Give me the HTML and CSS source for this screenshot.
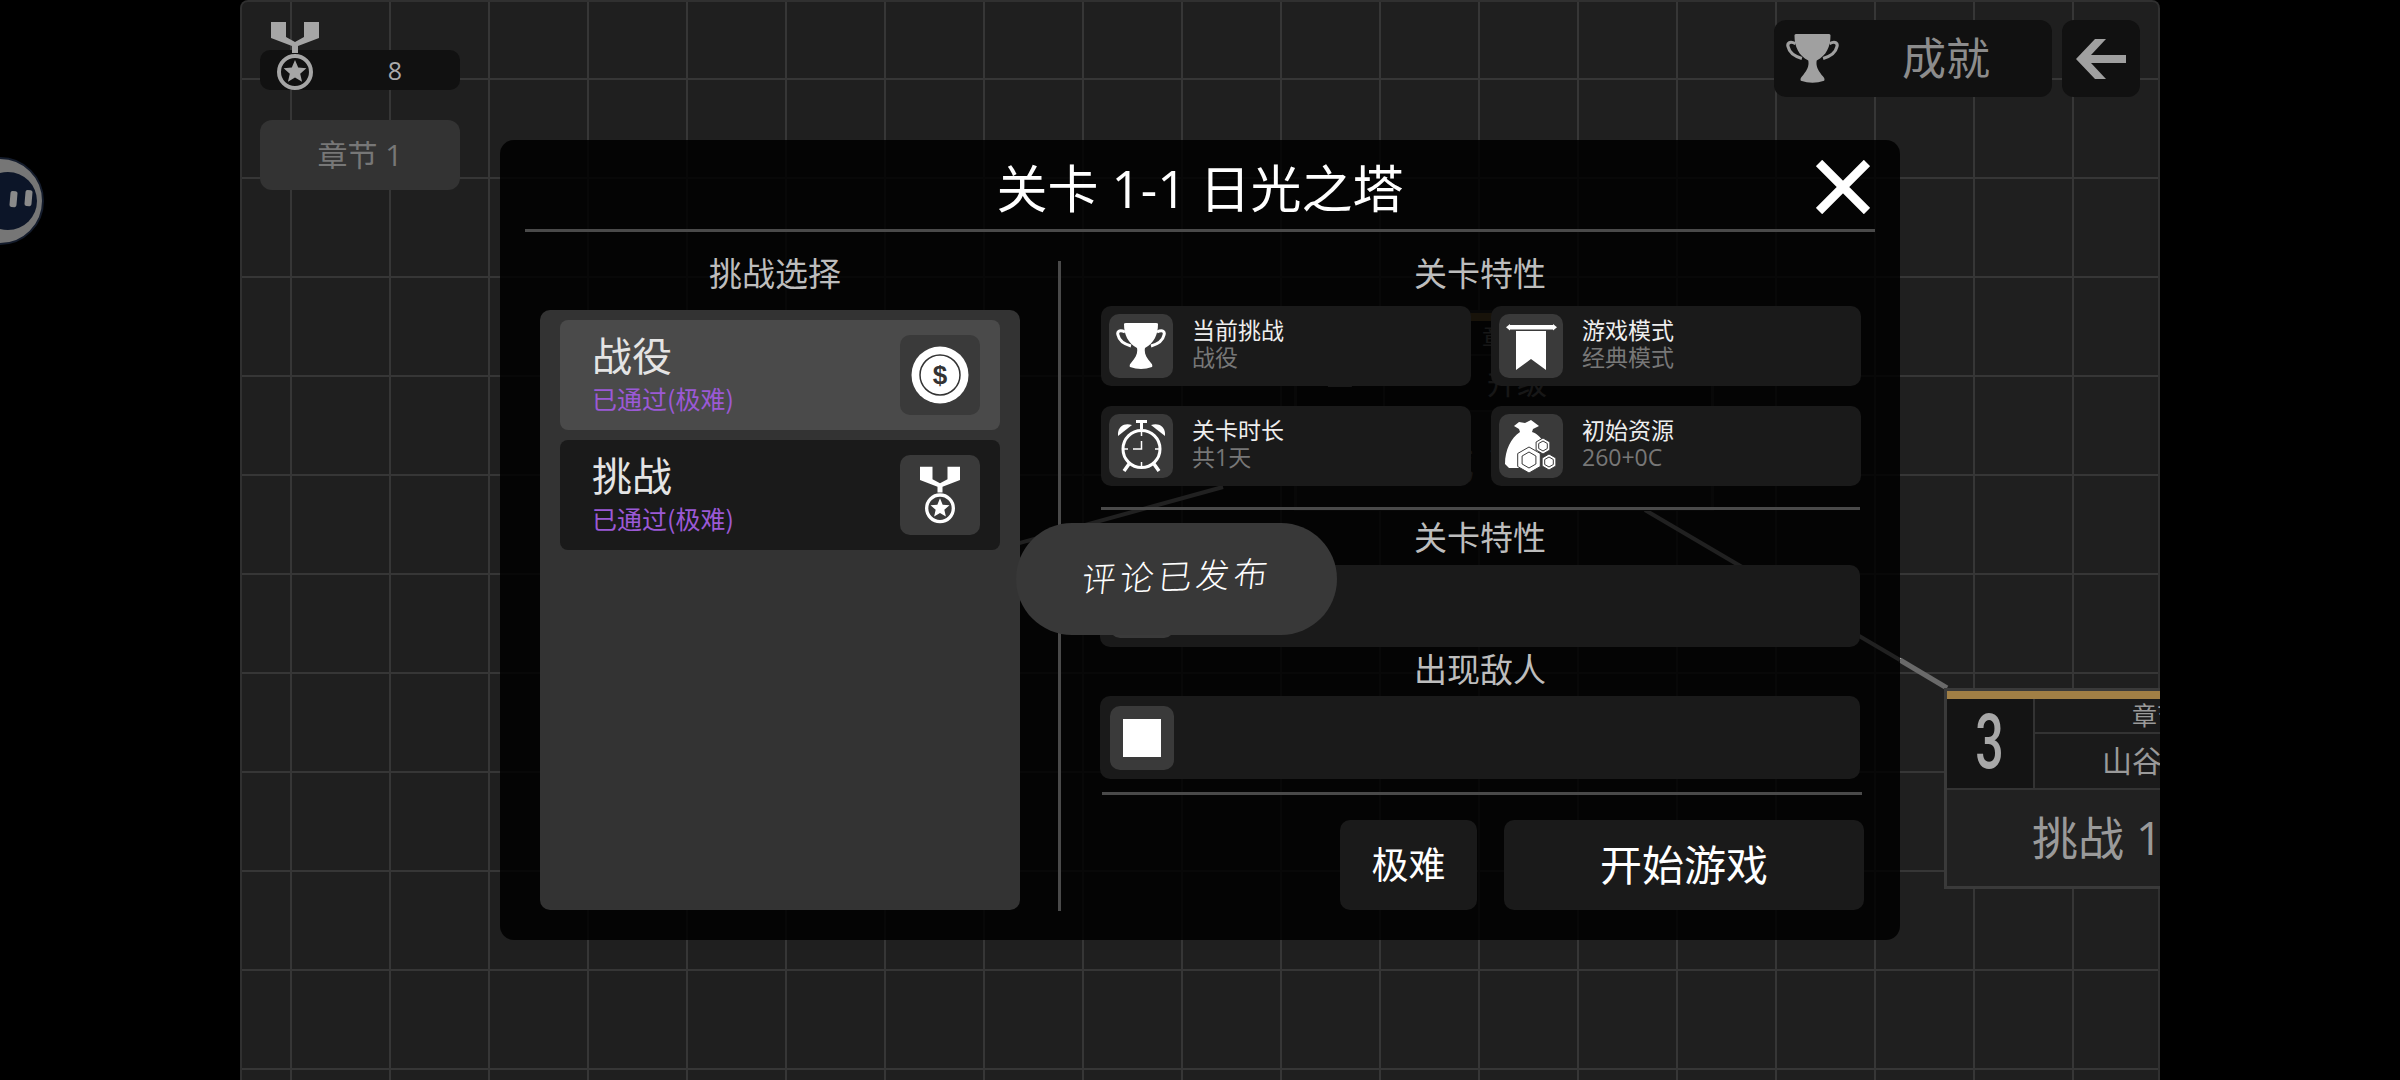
FILE: index.html
```html
<!DOCTYPE html>
<html lang="zh-CN">

<head>
    <meta charset="UTF-8">
    <title>关卡 1-1 日光之塔</title>
    <link rel="stylesheet" href="styles.css">
</head>

<body>
    <!-- shared icons -->
    <svg class="defs" aria-hidden="true">
        <symbol id="icon-medal" viewBox="0 0 48 68">
            <polygon fill="currentColor" points="0,0 15,0 15,15 24,20 33,15 33,0 48,0 48,16 27,24 27,31 21,31 21,24 0,16" />
            <circle cx="24" cy="50" r="16" fill="none" stroke="currentColor" stroke-width="4" />
            <polygon fill="currentColor" points="24,38 27.2,45.55 35.4,46.3 29.2,51.7 31.05,59.7 24,55.5 16.95,59.7 18.8,51.7 12.6,46.3 20.8,45.55" />
        </symbol>
        <symbol id="icon-trophy" viewBox="0 0 50 47">
            <path fill="currentColor" d="M8 1Q8 0 10 0H40Q42 0 42 1C42 12 38 20 29 25C28 30 30 34 35 40Q37 42 36 44Q25 48 14 44Q13 42 15 40C20 34 22 30 21 25C12 20 8 12 8 1Z" />
            <path fill="none" stroke="currentColor" stroke-width="3" d="M9 9C3 6 1 9 2 12C3 17 8 21 15 23" />
            <path fill="none" stroke="currentColor" stroke-width="3" d="M41 9C47 6 49 9 48 12C47 17 42 21 35 23" />
        </symbol>
    </svg>

    <!-- floating assistant ball on the black strip -->
    <svg class="float-ball" viewBox="0 0 50 100">
        <circle cx="0" cy="51" r="43" fill="#767676" stroke="#141c2c" stroke-width="2" />
        <circle cx="8" cy="51" r="29" fill="#0c1528" />
        <rect x="10" y="41" width="7" height="16" rx="2" fill="#8a8a8a" transform="rotate(5 13 49)" />
        <rect x="25" y="40" width="7" height="16" rx="2" fill="#8a8a8a" transform="rotate(5 28 48)" />
    </svg>

    <div class="game">
        <!-- map under the dialog -->
        <svg class="map-lines" viewBox="0 0 1920 1080">
            <line x1="660" y1="576" x2="983" y2="487" stroke="#ddd" stroke-width="4" />
            <line x1="1405" y1="510" x2="1660" y2="660" stroke="#ddd" stroke-width="4" />
            <line x1="1660" y1="660" x2="1707" y2="688" stroke="#6a6a6a" stroke-width="5" />
        </svg>

        <div class="node node-hidden">
            <div class="node-bar"></div>
            <div class="node-top">
                <div class="node-num"><span>2</span></div>
                <div class="node-info">
                    <div class="node-chapter">章节 2</div>
                    <div class="node-name">升级</div>
                </div>
            </div>
            <div class="node-bottom">挑战 1</div>
        </div>

        <div class="node node-right">
            <div class="node-bar"></div>
            <div class="node-top">
                <div class="node-num"><span>3</span></div>
                <div class="node-info">
                    <div class="node-chapter">章节 3</div>
                    <div class="node-name">山谷</div>
                </div>
            </div>
            <div class="node-bottom">挑战 1</div>
        </div>

        <!-- top bar -->
        <div class="hud">
            <div class="hud-left">
                <div class="medal-pill">
                    <svg class="medal-icon"><use href="#icon-medal" /></svg>
                    <span>8</span>
                </div>
                <div class="chapter-btn">章节 1</div>
            </div>
            <div class="hud-right">
                <div class="achieve-btn">
                    <svg class="achieve-icon"><use href="#icon-trophy" /></svg>
                    <span>成就</span>
                </div>
                <div class="back-btn">
                    <svg class="back-icon" viewBox="0 0 50 40">
                        <polygon points="0,20 19,0 30,0 15,16 50,16 50,24 15,24 30,40 19,40" />
                    </svg>
                </div>
            </div>
        </div>

        <!-- level dialog -->
        <div class="modal">
            <div class="modal-head">
                <h1>关卡 1-1 日光之塔</h1>
                <svg class="close-icon" viewBox="0 0 54 54">
                    <path d="M3 3L51 51M51 3L3 51" />
                </svg>
            </div>

            <div class="modal-body">
                <div class="left-col">
                    <div class="section-title left-title">挑战选择</div>
                    <div class="mode-panel">
                        <div class="mode-item active">
                            <div class="mode-text">
                                <div class="mode-name">战役</div>
                                <div class="mode-state">已通过(极难)</div>
                            </div>
                            <div class="mode-icon">
                                <svg class="coin-icon" viewBox="0 0 58 58">
                                    <circle cx="29" cy="29" r="28.5" fill="#fff" />
                                    <circle cx="29" cy="29" r="20" fill="none" stroke="#333" stroke-width="1.5" />
                                    <text x="29" y="38" text-anchor="middle" class="coin-sign">$</text>
                                </svg>
                            </div>
                        </div>
                        <div class="mode-item">
                            <div class="mode-text">
                                <div class="mode-name">挑战</div>
                                <div class="mode-state">已通过(极难)</div>
                            </div>
                            <div class="mode-icon">
                                <svg class="mode-medal"><use href="#icon-medal" /></svg>
                            </div>
                        </div>
                    </div>
                </div>

                <div class="v-divider"></div>

                <div class="right-col">
                    <div class="section-title">关卡特性</div>
                    <div class="stat-grid">
                        <div class="stat-card">
                            <div class="icon-box">
                                <svg class="stat-trophy"><use href="#icon-trophy" /></svg>
                            </div>
                            <div class="stat-text">
                                <div class="stat-name">当前挑战</div>
                                <div class="stat-value">战役</div>
                            </div>
                        </div>
                        <div class="stat-card">
                            <div class="icon-box">
                                <svg class="stat-banner" viewBox="0 0 51 47">
                                    <rect x="3" y="2" width="45" height="4.5" />
                                    <polygon points="0,4.2 4,1 4,7.5" />
                                    <polygon points="51,4.2 47,1 47,7.5" />
                                    <polygon points="10,8 40,8 40,47 25,36 10,47" />
                                </svg>
                            </div>
                            <div class="stat-text">
                                <div class="stat-name">游戏模式</div>
                                <div class="stat-value">经典模式</div>
                            </div>
                        </div>
                        <div class="stat-card">
                            <div class="icon-box">
                                <svg class="stat-clock" viewBox="0 0 47 52">
                                    <rect class="fill" x="18" y="0" width="11" height="3" />
                                    <rect class="fill" x="22" y="3" width="3" height="6" />
                                    <path class="fill" d="M0 16C-1 7 6 2 14 5Z" />
                                    <path class="fill" d="M47 16C48 7 41 2 33 5Z" />
                                    <circle class="line" cx="23.5" cy="29" r="18.5" stroke-width="3" />
                                    <path class="line" stroke-width="1.5" d="M23.5 12V16M23.5 42V46M6 29H10M37 29H41" />
                                    <path class="line" stroke-width="1.5" d="M23.5 21V29H15" />
                                    <path class="line" stroke-width="3.5" d="M11 44L6 51M36 44L41 51" />
                                </svg>
                            </div>
                            <div class="stat-text">
                                <div class="stat-name">关卡时长</div>
                                <div class="stat-value">共1天</div>
                            </div>
                        </div>
                        <div class="stat-card">
                            <div class="icon-box">
                                <svg class="stat-bag" viewBox="0 0 52 53">
                                    <path fill="#fff" d="M9 6L14 2L20 3L26 0L34 6L28 9L27 12C33 14 36 18 38 22L28 48L4 48L0 44C0 30 6 18 15 12L14 9Z" />
                                    <g fill="#fff" stroke="#3a3a3a" stroke-width="1">
                                        <polygon points="38,18 44.9,22 44.9,30 38,34 31.1,30 31.1,22" />
                                        <polygon points="38,21 42.3,23.5 42.3,28.5 38,31 33.7,28.5 33.7,23.5" />
                                        <polygon points="44,34 50.9,38 50.9,46 44,50 37.1,46 37.1,38" />
                                        <polygon points="44,37 48.3,39.5 48.3,44.5 44,47 39.7,44.5 39.7,39.5" />
                                        <polygon points="24,27 35.3,33.5 35.3,46.5 24,53 12.7,46.5 12.7,33.5" />
                                        <polygon points="24,32 30.9,36 30.9,44 24,48 17.1,44 17.1,36" />
                                    </g>
                                </svg>
                            </div>
                            <div class="stat-text">
                                <div class="stat-name">初始资源</div>
                                <div class="stat-value">260+0C</div>
                            </div>
                        </div>
                    </div>

                    <div class="h-divider"></div>

                    <div class="section-title second-title">关卡特性</div>
                    <div class="wide-card traits">
                        <div class="icon-box"></div>
                    </div>

                    <div class="section-title third-title">出现敌人</div>
                    <div class="wide-card enemies">
                        <div class="icon-box">
                            <div class="enemy-square"></div>
                        </div>
                    </div>

                    <div class="h-divider last"></div>

                    <div class="actions">
                        <div class="btn btn-level">极难</div>
                        <div class="btn btn-start">开始游戏</div>
                    </div>
                </div>
            </div>
        </div>

        <div class="toast"><span>评论已发布</span></div>
    </div>
</body>

</html>
```

FILE: styles.css
```css
/* Page and game area */
body {
    margin: 0;
    height: 1080px;
    background-color: #000;
    display: flex;
    justify-content: center;
    overflow: hidden;
    font-family: "Open Sans", "Noto Sans CJK SC", sans-serif;
}

.defs {
    position: absolute;
    width: 0;
    height: 0;
}

.float-ball {
    position: absolute;
    left: 0;
    top: 150px;
    width: 50px;
    height: 100px;
}

.game {
    position: relative;
    width: 1920px;
    height: 1080px;
    overflow: hidden;
    border-radius: 8px 8px 0 0;
    background-color: #1f1f1f;
    background-image:
        linear-gradient(to right, #363636 2px, transparent 2px),
        linear-gradient(to bottom, #363636 2px, transparent 2px);
    background-size: 99px 99px;
    background-position: 50px 78px;
    box-shadow: inset 0 2px 0 #303030, inset 2px 0 0 #303030, inset -2px 0 0 #303030;
}

.map-lines {
    position: absolute;
    left: 0;
    top: 0;
    width: 1920px;
    height: 1080px;
}

/* Chapter nodes on the map */
.node {
    position: absolute;
    width: 420px;
    height: 201px;
    box-sizing: border-box;
    border: 3px solid #3a3a3a;
    background-color: #212121;
    color: #9a9a9a;
}

.node-right {
    left: 1704px;
    top: 688px;
}

.node-hidden {
    left: 1054px;
    top: 310px;
}

.node-bar {
    height: 8px;
    background-color: #a17f45;
}

.node-top {
    display: flex;
    height: 91px;
    border-bottom: 2px solid #333;
    box-sizing: border-box;
}

.node-num {
    width: 88px;
    padding-bottom: 4px;
    background-color: #141414;
    border-right: 2px solid #333;
    box-sizing: border-box;
    display: flex;
    align-items: center;
    justify-content: center;
    font-family: "Roboto", sans-serif;
    font-weight: 500;
    font-size: 76px;
    color: #a8a8a8;
}

.node-hidden .node-num {
    padding-bottom: 10px;
}

.node-num span {
    transform: scaleX(0.66);
}

.node-info {
    flex: 1;
    display: flex;
    flex-direction: column;
    background-color: #1a1a1a;
}

.node-chapter {
    height: 33px;
    line-height: 33px;
    padding-left: 97px;
    font-size: 25px;
    border-bottom: 2px solid #333;
}

.node-name {
    flex: 1;
    line-height: 54px;
    padding-left: 67px;
    font-size: 30px;
}

.node-hidden .node-name {
    padding-left: 102px;
}

.node-bottom {
    height: 99px;
    line-height: 94px;
    padding-left: 85px;
    font-size: 46px;
}

/* Top bar */
.hud {
    position: relative;
    display: flex;
    justify-content: space-between;
    padding: 20px 20px 0;
}

.hud-left {
    width: 200px;
    padding-top: 30px;
}

.medal-pill {
    position: relative;
    height: 40px;
    border-radius: 10px;
    background-color: #111;
    color: #aaa;
    font-size: 25px;
    line-height: 40px;
    text-align: center;
    padding-left: 70px;
    box-sizing: border-box;
}

.medal-icon {
    position: absolute;
    left: 11px;
    top: -28px;
    width: 48px;
    height: 68px;
    color: #a6a6a6;
}

.chapter-btn {
    margin-top: 30px;
    height: 70px;
    border-radius: 12px;
    background-color: #333;
    color: #777;
    font-size: 30px;
    line-height: 70px;
    text-align: center;
}

.hud-right {
    display: flex;
    gap: 10px;
}

.achieve-btn {
    display: flex;
    align-items: center;
    width: 278px;
    height: 77px;
    padding-left: 12px;
    box-sizing: border-box;
    border-radius: 12px;
    background-color: #111;
    color: #8c8c8c;
    font-size: 44px;
}

.achieve-icon {
    width: 53px;
    height: 50px;
    color: #a0a0a0;
}

.achieve-btn span {
    margin: 0 0 5px 63px;
}

.back-btn {
    width: 78px;
    height: 77px;
    border-radius: 12px;
    background-color: #111;
    display: flex;
    align-items: center;
    justify-content: center;
}

.back-icon {
    width: 50px;
    height: 40px;
    fill: #a0a0a0;
}

/* Level dialog */
.modal {
    position: absolute;
    left: 260px;
    top: 140px;
    width: 1400px;
    height: 800px;
    border-radius: 14px;
    background-color: rgba(0, 0, 0, 0.85);
}

.modal-head {
    position: relative;
    height: 89px;
    margin: 0 25px;
    border-bottom: 3px solid #4a4a4a;
    display: flex;
    align-items: center;
    justify-content: center;
}

.modal-head h1 {
    margin: 0 0 -2px;
    font-size: 51px;
    font-weight: 400;
    color: #fff;
}

.close-icon {
    position: absolute;
    right: 5px;
    top: 20px;
    width: 54px;
    height: 54px;
    fill: none;
    stroke: #fff;
    stroke-width: 9;
}

.modal-body {
    display: flex;
}

.section-title {
    height: 40px;
    line-height: 40px;
    margin-top: 22px;
    text-align: center;
    font-size: 33px;
    color: #bdbdbd;
}

.left-col {
    width: 480px;
    margin-left: 40px;
}

.left-title {
    margin-bottom: 16px;
    padding-right: 10px;
}

.mode-panel {
    height: 600px;
    box-sizing: border-box;
    padding: 10px 20px;
    border-radius: 10px;
    background-color: #333;
    display: flex;
    flex-direction: column;
    gap: 10px;
}

.mode-item {
    height: 110px;
    padding: 0 20px 0 32px;
    border-radius: 8px;
    background-color: #1a1a1a;
    display: flex;
    align-items: center;
    justify-content: space-between;
}

.mode-item.active {
    background-color: #4a4a4a;
}

.mode-text {
    padding-bottom: 3px;
}

.mode-name {
    margin-bottom: 3px;
    font-size: 40px;
    line-height: 46px;
    color: #e4e4e4;
}

.mode-state {
    font-family: "Noto Sans CJK SC", sans-serif;
    font-size: 25px;
    line-height: 32px;
    color: #9b59d6;
}

.mode-icon {
    width: 80px;
    height: 80px;
    border-radius: 10px;
    background-color: #3a3a3a;
    display: flex;
    align-items: center;
    justify-content: center;
}

.coin-icon {
    width: 58px;
    height: 58px;
}

.coin-sign {
    font-family: "Liberation Sans", sans-serif;
    font-weight: 700;
    font-size: 26px;
    fill: #333;
}

.mode-medal {
    width: 40px;
    height: 58px;
    color: #fff;
}

.v-divider {
    width: 3px;
    height: 650px;
    margin: 29px 0 0 38px;
    background-color: #4a4a4a;
}

.right-col {
    width: 760px;
    margin-left: 39px;
}

.stat-grid {
    display: grid;
    grid-template-columns: 370px 370px;
    grid-auto-rows: 80px;
    gap: 20px;
    margin-top: 12px;
    margin-left: 1px;
}

.stat-card {
    display: flex;
    align-items: center;
    gap: 19px;
    padding-left: 8px;
    border-radius: 10px;
    background-color: #1a1a1a;
}

.icon-box {
    width: 64px;
    height: 64px;
    flex: none;
    border-radius: 10px;
    background-color: #3a3a3a;
    display: flex;
    align-items: center;
    justify-content: center;
}

.stat-text {
    padding-bottom: 4px;
}

.stat-name {
    font-size: 23px;
    line-height: 27.5px;
    color: #eee;
}

.stat-value {
    font-size: 23px;
    line-height: 27.5px;
    color: #777;
}

.stat-trophy {
    width: 50px;
    height: 47px;
    color: #fff;
}

.stat-banner {
    width: 51px;
    height: 47px;
    fill: #fff;
}

.stat-clock {
    width: 47px;
    height: 52px;
}

.stat-clock .fill {
    fill: #fff;
}

.stat-clock .line {
    fill: none;
    stroke: #fff;
}

.stat-bag {
    width: 52px;
    height: 53px;
}

.h-divider {
    height: 3px;
    margin: 21px 0 0 1px;
    background-color: #4a4a4a;
}

.h-divider.last {
    margin-top: 13px;
    margin-left: 2px;
    margin-right: -2px;
}

.second-title {
    margin-top: 8px;
}

.third-title {
    margin-top: 3px;
}

.wide-card {
    display: flex;
    align-items: center;
    padding-left: 10px;
    border-radius: 10px;
    background-color: #1a1a1a;
}

.traits {
    height: 82px;
    margin-top: 7px;
}

.enemies {
    height: 83px;
    margin-top: 6px;
}

.enemy-square {
    width: 38px;
    height: 38px;
    background-color: #fff;
}

.actions {
    display: flex;
    justify-content: flex-end;
    gap: 27px;
    margin-top: 25px;
    margin-right: -4px;
}

.btn {
    height: 90px;
    box-sizing: border-box;
    padding-bottom: 5px;
    border-radius: 10px;
    background-color: #1a1a1a;
    color: #fff;
    display: flex;
    align-items: center;
    justify-content: center;
}

.btn-level {
    width: 137px;
    font-size: 37px;
}

.btn-start {
    width: 360px;
    font-size: 42px;
}

/* Toast over the dialog */
.toast {
    position: absolute;
    left: 776px;
    top: 523px;
    width: 321px;
    height: 112px;
    border-radius: 56px;
    background-color: #383838;
    color: #fff;
    font-size: 34px;
    font-weight: 300;
    letter-spacing: 4px;
    line-height: 106px;
    text-align: center;
}

.toast span {
    display: inline-block;
    transform: rotate(-2deg) skewX(-8deg);
}
```
